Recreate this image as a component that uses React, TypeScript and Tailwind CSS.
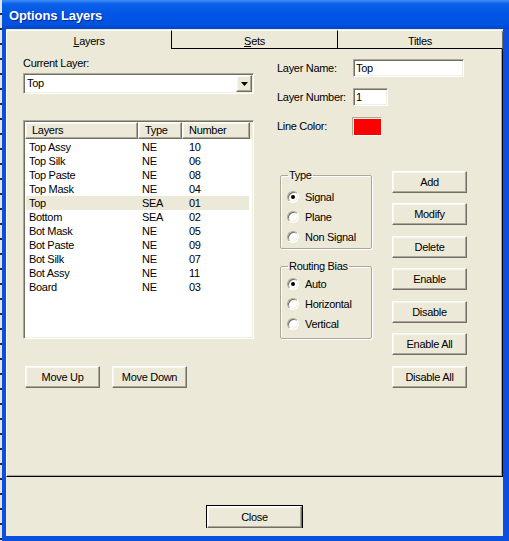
import React from 'react'

const ROWS = [
  ['Top Assy', 'NE', '10'],
  ['Top Silk', 'NE', '06'],
  ['Top Paste', 'NE', '08'],
  ['Top Mask', 'NE', '04'],
  ['Top', 'SEA', '01'],
  ['Bottom', 'SEA', '02'],
  ['Bot Mask', 'NE', '05'],
  ['Bot Paste', 'NE', '09'],
  ['Bot Silk', 'NE', '07'],
  ['Bot Assy', 'NE', '11'],
  ['Board', 'NE', '03'],
]

const SUNKEN =
  'border border-t-[#aca899] border-l-[#aca899] border-r-white border-b-white shadow-[inset_1px_1px_0_#716f64,inset_-1px_-1px_0_#f1efe2]'
const RAISED =
  'border border-t-white border-l-white border-r-[#716f64] border-b-[#716f64] shadow-[inset_-1px_-1px_0_#aca899,inset_1px_1px_0_#f8f7f1]'

function Btn({ label, className = '' }: { label: string; className?: string }) {
  return (
    <div className={`flex h-[22px] w-[75px] items-center justify-center bg-[#ece9d8] ${RAISED} ${className}`}>
      {label}
    </div>
  )
}

function Radio({ label, checked = false }: { label: string; checked?: boolean }) {
  return (
    <div className="flex h-[20px] items-center">
      <span
        className={`ml-[6px] flex h-[12px] w-[12px] items-center justify-center rounded-full bg-white ${SUNKEN}`}
      >
        {checked && <span className="h-[4px] w-[4px] rounded-full bg-black" />}
      </span>
      <span className="ml-[6px]">{label}</span>
    </div>
  )
}

function Group({ title, children, className = '' }: { title: string; children: React.ReactNode; className?: string }) {
  return (
    <fieldset
      className={`w-[92px] rounded-[2px] border border-[#aca899] shadow-[1px_1px_0_white,inset_1px_1px_0_white] ${className}`}
    >
      <legend className="ml-[7px] px-[1px] leading-[13px]">{title}</legend>
      {children}
    </fieldset>
  )
}

export default function App() {
  return (
    <div className="flex h-[541px] w-[509px] overflow-hidden font-['Liberation_Sans',Arial,sans-serif] text-[11px] tracking-[-0.3px] text-black">
      {/* desktop behind the window */}
      <div className="w-[2px] bg-[repeating-linear-gradient(180deg,#e4e4e4_0px,#e4e4e4_13px,#2a2a2a_13px,#2a2a2a_15px)]" />

      <div className="flex w-[507px] flex-col">
        {/* Title bar */}
        <div className="flex h-[29px] items-center bg-[linear-gradient(180deg,#3d8ef7_0%,#0a5fe8_14%,#0055e5_50%,#0052df_85%,#0044cc_100%)] pl-[7px] pt-[3px]">
          <span className="text-[13px] font-bold tracking-[-0.1px] text-white [text-shadow:1px_1px_0_#0a2a8c]">
            Options Layers
          </span>
        </div>

        <div className="flex flex-1 flex-col border-b-[5px] border-l-[4px] border-r-[6px] border-[#0a4fe0] bg-[#ece9d8]">
          {/* Tabs */}
          <div className="mt-[1px] flex h-[19px]">
            <div className="flex w-[165px] justify-center rounded-tl-[3px] border-l border-t border-white pt-[2px]">
              <span>
                <span className="underline">L</span>ayers
              </span>
            </div>
            <div className="flex w-[166px] justify-center border-b border-l border-t border-b-black border-l-black border-t-white pt-[2px]">
              <span>
                <span className="underline">S</span>ets
              </span>
            </div>
            <div className="flex w-[166px] justify-center rounded-tr-[3px] border-b border-l border-r border-t border-b-black border-l-black border-r-[#716f64] border-t-white pt-[2px]">
              Titles
            </div>
          </div>

          {/* Tab panel */}
          <div className="flex h-[428px] border-b border-l border-r border-b-black border-l-white border-r-black pl-[16px] shadow-[inset_-1px_-1px_0_#aca899]">
            {/* Left column */}
            <div className="flex w-[231px] flex-col pt-[8px]">
              <div className="h-[13px] leading-[13px]">Current Layer:</div>
              <div className={`mt-[3px] flex h-[21px] items-center bg-white ${SUNKEN}`}>
                <span className="flex-1 pl-[3px]">Top</span>
                <div className={`mr-[1px] flex h-[17px] w-[16px] items-center justify-center bg-[#ece9d8] ${RAISED}`}>
                  <svg width="7" height="4" viewBox="0 0 7 4">
                    <path d="M0 0h7L3.5 4z" fill="#000" />
                  </svg>
                </div>
              </div>

              {/* List */}
              <div className={`mt-[26px] flex h-[219px] flex-col bg-white p-[1px] ${SUNKEN}`}>
                <div className="flex h-[17px] bg-[#ece9d8]">
                  <div className={`flex w-[113px] items-center pl-[6px] ${RAISED}`}>Layers</div>
                  <div className={`flex w-[44px] items-center pl-[6px] ${RAISED}`}>Type</div>
                  <div className={`flex w-[68px] items-center pl-[6px] ${RAISED}`}>Number</div>
                </div>
                <div className="mt-[1px] flex flex-col">
                  {ROWS.map(([name, type, num]) => (
                    <div
                      key={name}
                      className={`ml-[1px] flex h-[14px] w-[223px] items-center leading-[14px] ${
                        name === 'Top' ? 'bg-[#ece9d8]' : ''
                      }`}
                    >
                      <span className="w-[116px] pl-[3px]">{name}</span>
                      <span className="w-[47px]">{type}</span>
                      <span>{num}</span>
                    </div>
                  ))}
                </div>
              </div>

              <div className="mt-[27px] flex gap-[12px] pl-[2px]">
                <Btn label="Move Up" />
                <Btn label="Move Down" />
              </div>
            </div>

            {/* Right column */}
            <div className="ml-[23px] flex flex-col pt-[10px]">
              <div className="flex h-[18px] items-center">
                <span className="w-[76px]">Layer Name:</span>
                <div className={`flex h-[18px] w-[111px] items-center bg-white pl-[2px] ${SUNKEN}`}>Top</div>
              </div>
              <div className="mt-[11px] flex h-[18px] items-center">
                <span className="w-[76px]">Layer Number:</span>
                <div className={`flex h-[18px] w-[35px] items-center bg-white pl-[2px] ${SUNKEN}`}>1</div>
              </div>
              <div className="mt-[11px] flex h-[18px] items-center">
                <span className="w-[75px]">Line Color:</span>
                <div className="h-[19px] w-[30px] border border-b-white border-l-[#aca899] border-r-white border-t-[#aca899] bg-[#ff0000] shadow-[inset_1px_1px_0_#f1efe2]" />
              </div>

              <div className="mt-[34px] flex items-start">
                <div className="ml-[3px] flex flex-col">
                  <Group title="Type" className="h-[80px]">
                    <div className="mt-[5px]">
                      <Radio label="Signal" checked />
                      <Radio label="Plane" />
                      <Radio label="Non Signal" />
                    </div>
                  </Group>
                  <Group title="Routing Bias" className="mt-[11px] h-[79px]">
                    <div className="mt-[1px]">
                      <Radio label="Auto" checked />
                      <Radio label="Horizontal" />
                      <Radio label="Vertical" />
                    </div>
                  </Group>
                </div>

                <div className="ml-[20px] flex flex-col pt-[2px]">
                  <Btn label="Add" />
                  <Btn label="Modify" className="mt-[10px]" />
                  <Btn label="Delete" className="mt-[11px]" />
                  <Btn label="Enable" className="mt-[10px]" />
                  <Btn label="Disable" className="mt-[11px]" />
                  <Btn label="Enable All" className="mt-[10px]" />
                  <Btn label="Disable All" className="mt-[11px]" />
                </div>
              </div>
            </div>
          </div>

          {/* Bottom bar */}
          <div className="flex flex-1 justify-center pt-[28px]">
            <div className="h-[23px] border border-black">
              <Btn label="Close" className="h-[21px] w-[95px]" />
            </div>
          </div>
        </div>
      </div>
    </div>
  )
}
